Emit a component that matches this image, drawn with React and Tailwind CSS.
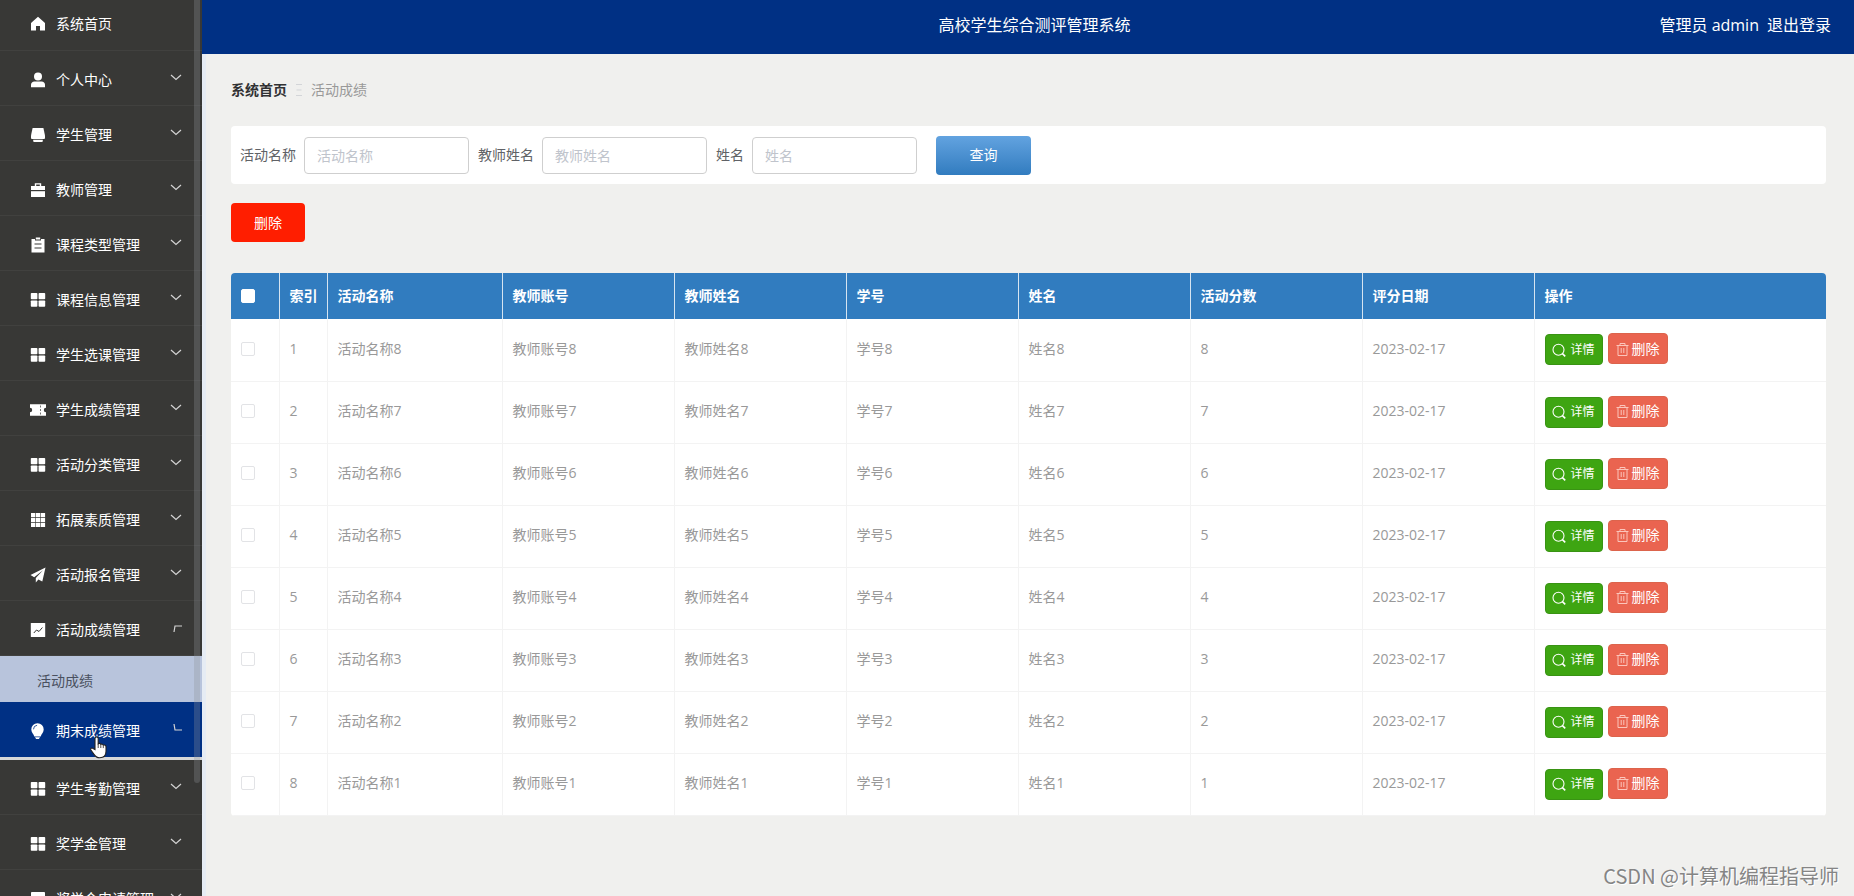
import { useState } from 'react';

const ICONS = {
  home: <path d="M8 .8 1 6.9V14.5h5V10h4v4.5h5V6.9z" />,
  user: (
    <>
      <circle cx="8" cy="4.4" r="4" />
      <path d="M1 15.2v-2.4c0-2 1.4-3.4 3.4-3.4h7.2c2 0 3.4 1.4 3.4 3.4v2.4z" />
    </>
  ),
  student: (
    <>
      <path d="M2.600 1h10.800l1.600 7.600V11a1 1 0 0 1-1 1H2a1 1 0 0 1-1-1V8.600z" />
      <path d="M3.200 12.800h9.600v1.200a1 1 0 0 1-1 1H4.200a1 1 0 0 1-1-1z" />
    </>
  ),
  briefcase: (
    <>
      <path d="M1 4h3.800V1.200h6.400V4H15v4H1zm5.200 0h3.600V2.600H6.200z" />
      <path d="M1 9.200h14V15H1z" />
    </>
  ),
  clipboard: (
    <path
      fillRule="evenodd"
      d="M1.500 2H5v1.500h6V2h3.500v13.500h-13zM5.800.6h4.400v2H5.800zM4.500 6.600v1h7v-1zm0 4v1h7v-1z"
    />
  ),
  grid: (
    <>
      <rect x=".8" y="1" width="6.600" height="6.300" rx=".8" />
      <rect x="8.600" y="1" width="6.600" height="6.300" rx=".8" />
      <rect x=".8" y="8.500" width="6.600" height="6.300" rx=".8" />
      <rect x="8.600" y="8.500" width="6.600" height="6.300" rx=".8" />
    </>
  ),
  ticket: (
    <path
      fillRule="evenodd"
      d="M0 2.200h16v3.600a2.200 2.200 0 0 0 0 4.400v3.600H0v-3.600a2.200 2.200 0 0 0 0-4.400zM10.300 3.500v2h.7v-2zm0 3.500v2h.7V7zm0 3.500v2h.7v-2z"
    />
  ),
  table: (
    <path d="M1 1h4.300v4.200H1zM5.900 1h4.300v4.200H5.900zM10.800 1h4.300v4.200h-4.300zM1 5.900h4.300v4.200H1zM5.900 5.900h4.300v4.200H5.900zM10.800 5.900h4.300v4.200h-4.300zM1 10.800h4.300V15H1zM5.900 10.800h4.300V15H5.900zM10.800 10.800h4.300V15h-4.300z" />
  ),
  plane: <path d="M15.500.5.5 8l3.700 2.200L13 3.200l-7.200 7.900v4.400l2.600-3 3.900 1.900z" />,
  chart: (
    <>
      <rect x=".8" y="1" width="14.400" height="14" rx=".6" />
      <path d="m3.800 11 2.700-3 2.500 1.500 3.400-4" fill="none" stroke="#383836" strokeWidth="1" />
    </>
  ),
  bulb: (
    <>
      <path d="M7.500.2a6.200 6.200 0 0 1 6.200 6.300c0 3-2.400 4.400-3 7H4.300c-.6-2.600-3-4-3-7A6.200 6.200 0 0 1 7.500.2zM5 14.200h5L8.900 16H6.100z" />
      <path d="M3.500 6.300a4 4 0 0 1 3.600-4" fill="none" stroke="#003084" strokeWidth=".8" />
    </>
  ),
  card: <rect x="1" y="1" width="14" height="13" rx=".8" />,
};

const ARROWS = {
  down: 'm1 3 5 4.500L11 3',
  opening: 'M4 10l1-6h7',
  closing: 'M4 1l1 6h7',
};

const MENU = [
  { label: '个人中心', icon: 'user' },
  { label: '学生管理', icon: 'student' },
  { label: '教师管理', icon: 'briefcase' },
  { label: '课程类型管理', icon: 'clipboard' },
  { label: '课程信息管理', icon: 'grid' },
  { label: '学生选课管理', icon: 'grid' },
  { label: '学生成绩管理', icon: 'ticket' },
  { label: '活动分类管理', icon: 'grid' },
  { label: '拓展素质管理', icon: 'table' },
  { label: '活动报名管理', icon: 'plane' },
  { label: '活动成绩管理', icon: 'chart', arrow: 'opening', children: ['活动成绩'] },
  { label: '期末成绩管理', icon: 'bulb', arrow: 'closing', active: true },
  { label: '学生考勤管理', icon: 'grid' },
  { label: '奖学金管理', icon: 'grid' },
  { label: '奖学金申请管理', icon: 'card' },
];

const FILTERS = ['活动名称', '教师姓名', '姓名'];

const COLUMNS = ['活动名称', '教师账号', '教师姓名', '学号', '姓名', '活动分数', '评分日期'];

const ROWS = [8, 7, 6, 5, 4, 3, 2, 1].map((n) => ({
  id: n,
  cells: [`活动名称${n}`, `教师账号${n}`, `教师姓名${n}`, `学号${n}`, `姓名${n}`, `${n}`, '2023-02-17'],
}));

function MenuIcon({ name }) {
  return (
    <svg viewBox="0 0 16 16" className="size-4 shrink-0 fill-white" aria-hidden="true">
      {ICONS[name]}
    </svg>
  );
}

function MenuItem({ item }) {
  return (
    <li>
      <button
        className={
          item.active
            ? 'flex h-[58px] w-full items-center border-b-[3px] border-[#d6d7d8] bg-[#003084] pl-[30px] pr-5 pt-[3px] text-white'
            : 'flex h-[55px] w-full items-center border-b border-[#41413f] pl-[30px] pr-5 pt-[3px] text-white'
        }
      >
        <MenuIcon name={item.icon} />
        <span className="ml-2.5">{item.label}</span>
        <svg viewBox="0 0 12 12" className="mb-1 ml-auto size-3 shrink-0" fill="none" stroke="#d4d4d4" strokeWidth="1.2" aria-hidden="true">
          <path d={ARROWS[item.arrow || 'down']} />
        </svg>
      </button>
      {item.children && (
        <ul>
          {item.children.map((child) => (
            <li key={child}>
              <a href="#" className="flex h-[46px] items-center bg-[#b8c4dc] pl-[37px] pt-[3px] text-[#4a5160]">
                {child}
              </a>
            </li>
          ))}
        </ul>
      )}
    </li>
  );
}

function Sidebar() {
  return (
    <aside className="sticky top-0 h-screen w-[202px] shrink-0 overflow-hidden bg-[#383836]">
      <ul>
        <li>
          <button className="flex h-[51px] w-full items-center border-b border-[#41413f] pb-0.5 pl-[30px] text-white">
            <MenuIcon name="home" />
            <span className="ml-2.5">系统首页</span>
          </button>
        </li>
        {MENU.map((item) => (
          <MenuItem key={item.label} item={item} />
        ))}
      </ul>
      {/* scrollbar thumb */}
      <div className="absolute right-0.5 top-0 h-[783px] w-1.5 rounded-b bg-[#909399]/30" />
      {/* pointer */}
      <svg viewBox="0 0 17 23" className="absolute left-[90px] top-[736px] h-[23px] w-[17px]" fill="#fff" stroke="#222" strokeWidth="1.1" aria-hidden="true">
        <path d="M5 13.500V2.500a1.600 1.600 0 0 1 3.200 0v5.200c1-.7 2.300-.3 2.600.6 1-.5 2.200-.1 2.500.8 1.400-.5 2.700.2 2.700 1.600v4.600c0 4-2.300 6.500-6.200 6.500-3 0-4.500-1.200-5.800-3.400L.9 14c-.8-1.500 1-2.600 2.200-1.500z" />
        <path d="M8.200 7.700V12M10.800 8.300V12M13.300 9.100v3" fill="none" strokeWidth=".8" />
      </svg>
    </aside>
  );
}

function Header() {
  return (
    <header className="grid h-[54px] grid-cols-[1fr_auto_1fr] items-center bg-[#003084] pb-1 pl-9 pr-[23px] text-base text-white">
      <h1 className="col-start-2">高校学生综合测评管理系统</h1>
      <div className="flex justify-end gap-2">
        <span>管理员 admin</span>
        <a href="#">退出登录</a>
      </div>
    </header>
  );
}

function SearchBar() {
  return (
    <form className="flex h-[58px] items-center rounded-sm bg-white pl-[9px]" onSubmit={(e) => e.preventDefault()}>
      {FILTERS.map((name) => (
        <label key={name} className="mr-[9px] flex items-center gap-2 text-[#606266]">
          {name}
          <input
            type="text"
            placeholder={name}
            className="h-[37px] w-[165px] rounded border border-[#cfcfcf] bg-white px-3 placeholder:text-[#c0c4cc]"
          />
        </label>
      ))}
      <button className="ml-2.5 h-[39px] w-[95px] rounded bg-linear-to-b from-[#62a3e0] to-[#317cbf] text-white">查询</button>
    </form>
  );
}

function Checkbox({ label, checked, onChange, className }) {
  return (
    <input
      type="checkbox"
      aria-label={label}
      checked={checked}
      onChange={onChange}
      className={`block size-3.5 appearance-none rounded-xs border bg-white checked:bg-[#409eff] ${className}`}
    />
  );
}

function RowActions() {
  return (
    <div className="flex items-center gap-[5px]">
      <button className="mt-0.5 flex h-[31px] w-[58px] items-center justify-center gap-1 rounded border border-[#399314] bg-[#3ea512] text-xs text-white">
        <svg viewBox="0 0 14 14" className="size-3.5" fill="none" stroke="#fff" strokeWidth="1.1" aria-hidden="true">
          <circle cx="6.500" cy="6.700" r="5.500" />
          <path d="m10.400 10.600 2.800 2.800" strokeWidth="1.600" />
        </svg>
        详情
      </button>
      <button className="flex h-[31px] w-[60px] items-center justify-center gap-[3px] rounded border border-[#dc644c] bg-[#ea6450] text-white">
        <svg viewBox="0 0 13 14" className="h-3.5 w-[13px]" fill="none" stroke="#fbc5bb" strokeWidth="1" aria-hidden="true">
          <path d="M.5 3.500h12M4 3.500v-2h5v2M2 3.500v10h9v-10M5.200 6v5M7.800 6v5" />
        </svg>
        删除
      </button>
    </div>
  );
}

function ScoreTable() {
  const [selected, setSelected] = useState([]);
  const allSelected = selected.length === ROWS.length;

  const toggle = (id) => {
    setSelected((prev) => (prev.includes(id) ? prev.filter((x) => x !== id) : [...prev, id]));
  };

  return (
    <div className="overflow-hidden rounded bg-white">
      <table className="w-full table-fixed text-left">
        <colgroup>
          <col className="w-12" />
          <col className="w-12" />
          <col className="w-[175px]" />
          {COLUMNS.slice(1).map((c) => (
            <col key={c} className="w-[172px]" />
          ))}
          <col />
        </colgroup>
        <thead className="bg-[#317cbf] text-white">
          <tr className="h-[46px]">
            <th className="border-r border-[#d5e4f1] pl-2.5">
              <Checkbox
                label="全选"
                checked={allSelected}
                onChange={() => setSelected(allSelected ? [] : ROWS.map((r) => r.id))}
                className="border-white"
              />
            </th>
            <th className="whitespace-nowrap border-r border-[#d5e4f1] pl-2.5">索引</th>
            {COLUMNS.map((c) => (
              <th key={c} className="border-r border-[#d5e4f1] pl-2.5">
                {c}
              </th>
            ))}
            <th className="pl-2.5">操作</th>
          </tr>
        </thead>
        <tbody className="text-[#999]">
          {ROWS.map((row, i) => (
            <tr key={row.id} className="h-[62px] border-b border-[#f3f3f3]">
              <td className="border-r border-[#f3f3f3] pb-0.5 pl-2.5">
                <Checkbox
                  label={`选择第${i + 1}行`}
                  checked={selected.includes(row.id)}
                  onChange={() => toggle(row.id)}
                  className="border-[#e2e3e6]"
                />
              </td>
              <td className="border-r border-[#f3f3f3] pb-0.5 pl-2.5">{i + 1}</td>
              {row.cells.map((cell, j) => (
                <td key={j} className="border-r border-[#f3f3f3] pb-0.5 pl-2.5">
                  {cell}
                </td>
              ))}
              <td className="pb-0.5 pl-2.5">
                <RowActions />
              </td>
            </tr>
          ))}
        </tbody>
      </table>
    </div>
  );
}

function App() {
  return (
    <div className="flex min-h-screen bg-[#f0f0ee] font-['Open_Sans','Noto_Sans_CJK_SC',sans-serif] text-sm">
      <Sidebar />
      <div className="flex min-w-0 flex-1 flex-col border-l-4 border-[#e6ecf4]">
        <div className="-ml-1">
          <Header />
        </div>
        <main className="pl-[25px] pr-7 pt-[26px]">
          <nav className="flex items-center gap-2">
            <a href="#" className="font-bold text-[#303133]">
              系统首页
            </a>
            <svg viewBox="0 0 8 12" className="h-3 w-2" stroke="#d3d5d8" strokeWidth="1" aria-hidden="true">
              <path d="M1 .5h6M1.500 6h5M1 11.500h6" />
            </svg>
            <span className="text-[#999]">活动成绩</span>
          </nav>
          <div className="mt-[26px]">
            <SearchBar />
          </div>
          <button className="mb-[31px] mt-[19px] h-[39px] w-[74px] rounded bg-[#ff1e00] text-white">删除</button>
          <ScoreTable />
        </main>
        <footer className="mt-auto pb-1.5 pr-[15px] text-right font-['Noto_Sans_CJK_SC',sans-serif] text-xl text-[#858585] [text-shadow:1px_1px_0_#fff]">
          CSDN @计算机编程指导师
        </footer>
      </div>
    </div>
  );
}

export default App;
